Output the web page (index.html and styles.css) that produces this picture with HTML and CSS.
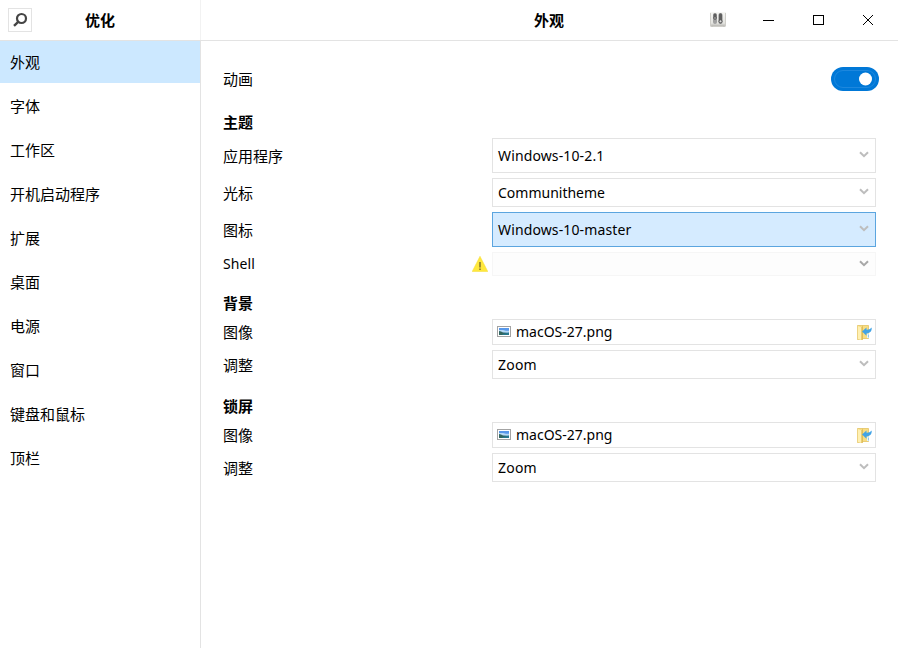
FILE: index.html
```html
<!DOCTYPE html>
<html lang="zh-CN">
<head>
<meta charset="utf-8">
<title>优化</title>
<link rel="stylesheet" href="styles.css">
</head>
<body>
<svg class="defs" width="0" height="0">
  <symbol id="chevron" viewBox="0 0 10 7"><path d="M1 1.200 5 5.200 9 1.200" fill="none" stroke="currentColor" stroke-width="2"/></symbol>
  <symbol id="picture" viewBox="0 0 14 11">
    <rect x=".5" y=".5" width="13" height="10" fill="#fff" stroke="#a3a3a3"/>
    <rect x="2" y="2" width="10" height="7" fill="#5797ea"/>
    <path d="M2 4h4l3 .8h3v2H2z" fill="#b5d8f5"/>
    <path d="M2 5q2 0 4 1.500l6 .5v2H2z" fill="#32665f"/>
    <path d="M6 8 12 6.500V9H5z" fill="#26788d"/>
  </symbol>
  <symbol id="open" viewBox="0 0 16 17">
    <path d="M1.500 1.500h5v14h-5zM6.500 1.500h6v13h-6z" fill="#f8dd83" stroke="#e3c363" stroke-width=".8"/>
    <path d="M1.800 2 5.500 3.500v12.500l-3.700-1z" fill="#fff0b2"/>
    <path d="M6 3v13" stroke="#d9b64f"/>
    <path d="M11 9.500h2v4.500h-2z" fill="#e8f4fb"/>
    <path d="M6 7.500 10.500 3.500v2.300Q13.500 6 15.800 3.500q0 5-4 5.700l-1.300.2v2.300z" fill="#42a4e6"/>
    <path d="M12.500 10.500v3" stroke="#8bc9ef"/>
  </symbol>
</svg>
<div class="window">
  <header class="titlebar">
    <div class="side-title">
      <button class="search" aria-label="搜索"><svg width="16" height="16" viewBox="0 0 16 16"><circle cx="9.500" cy="6.500" r="4.500" fill="none" stroke="#454545" stroke-width="2.200"/><path d="M6.200 9.800 2 13.800" stroke="#454545" stroke-width="2.400"/></svg></button>
      <h1>优化</h1>
    </div>
    <div class="main-title">
      <h1>外观</h1>
      <div class="controls">
        <svg class="app" width="16" height="16" viewBox="0 0 16 16">
          <defs><linearGradient id="plate" x2="0" y2="1"><stop stop-color="#f7f7f5"/><stop offset=".75" stop-color="#e3e3df"/><stop offset="1" stop-color="#aaa9a4"/></linearGradient></defs>
          <path d="M0 0h16v13q0 2-2 2H2q-2 0-2-2z" fill="url(#plate)"/>
          <path d="M.5 1v12q0 1.500 2 1.500h11q2 0 2-1.500V1" fill="none" stroke="#cfcec9"/>
          <rect x="3" y="1" width="4" height="11" rx="2" fill="#a0a0a0"/><rect x="8.500" y="1" width="4" height="11" rx="2" fill="#888"/>
          <path d="M3.500 3a1.500 1.500 0 0 1 3 0v3h-3zM9 3a1.500 1.500 0 0 1 3 0v5H9z" fill="#5e5e5e"/>
          <circle cx="5" cy="6" r="1.300" fill="#ccc" stroke="#555"/><circle cx="10.500" cy="9.300" r="1.500" fill="#ddd" stroke="#555"/>
        </svg>
        <svg width="12" height="12" viewBox="0 0 12 12" shape-rendering="crispEdges"><path d="M.5 6.500h11" stroke="#000"/></svg>
        <svg width="12" height="12" viewBox="0 0 12 12" shape-rendering="crispEdges"><path d="M1 1.500h10v9H1z" fill="none" stroke="#000"/></svg>
        <svg width="12" height="12" viewBox="0 0 12 12"><path d="M1 1l10 10M11 1 1 11" stroke="#000"/></svg>
      </div>
    </div>
  </header>
  <div class="body">
    <nav class="sidebar">
      <a class="active">外观</a><a>字体</a><a>工作区</a><a>开机启动程序</a><a>扩展</a><a>桌面</a><a>电源</a><a>窗口</a><a>键盘和鼠标</a><a>顶栏</a>
    </nav>
    <main class="content">
      <div class="row animation"><span class="label">动画</span>
        <svg class="switch" width="48" height="24" viewBox="0 0 48 24"><rect width="48" height="24" rx="12" fill="#0078d7"/><rect x="3.500" y="3.500" width="41" height="17" rx="8.500" fill="none" stroke="#3192e0" stroke-width=".6"/><circle cx="34.500" cy="12" r="6.500" fill="#fff"/></svg>
      </div>
      <h2>主题</h2>
      <section>
        <div class="row tall"><span class="label">应用程序</span><div class="field"><span class="value windows">Windows-10-2.1</span><svg class="arrow"><use href="#chevron"/></svg></div></div>
        <div class="row mid"><span class="label">光标</span><div class="field"><span class="value">Communitheme</span><svg class="arrow"><use href="#chevron"/></svg></div></div>
        <div class="row tall"><span class="label">图标</span><div class="field selected"><span class="value windows">Windows-10-master</span><svg class="arrow"><use href="#chevron"/></svg></div></div>
        <div class="row shell"><span class="label latin">Shell</span>
          <svg class="warning" width="16" height="16" viewBox="0 0 16 16"><path d="M8 .3 15.800 15.500H.2z" fill="#ffe83d" stroke="#f5dc32" stroke-width=".5"/><path d="M8 6v5.500M8 12.500v1.500" stroke="#a08f30" stroke-width="2"/></svg>
          <div class="field disabled"><svg class="arrow"><use href="#chevron"/></svg></div></div>
      </section>
      <h2>背景</h2>
      <section>
        <div class="row file"><span class="label">图像</span><div class="field"><svg class="thumb"><use href="#picture"/></svg><span class="value">macOS-27.png</span><svg class="folder"><use href="#open"/></svg></div></div>
        <div class="row mid"><span class="label">调整</span><div class="field"><span class="value zoom">Zoom</span><svg class="arrow"><use href="#chevron"/></svg></div></div>
      </section>
      <h2>锁屏</h2>
      <section>
        <div class="row file"><span class="label">图像</span><div class="field"><svg class="thumb"><use href="#picture"/></svg><span class="value">macOS-27.png</span><svg class="folder"><use href="#open"/></svg></div></div>
        <div class="row mid"><span class="label">调整</span><div class="field"><span class="value zoom">Zoom</span><svg class="arrow"><use href="#chevron"/></svg></div></div>
      </section>
    </main>
  </div>
</div>
</body>
</html>
```
FILE: styles.css
```css
* { box-sizing: border-box; }
body { margin: 0; background: #fff; color: #000; font: 15px/22px "Noto Sans CJK SC", sans-serif; }
.defs { display: block; height: 0; }
.window { height: 648px; display: flex; flex-direction: column; overflow: hidden; }
.titlebar { display: flex; height: 41px; border-bottom: 1px solid #e3e3e3; }
h1, h2 { margin: 0; font-size: 15px; line-height: 22px; font-weight: 700; }
.side-title { display: grid; grid-template-columns: 24px 1fr 24px; align-items: center; width: 201px; padding: 0 8px; border-right: 1px solid #f2f2f2; text-align: center; }
.search { width: 24px; height: 24px; padding: 3px; border: 1px solid #e3e3e3; background: #fff; }
.search svg { display: block; }
.main-title { display: grid; grid-template-columns: 164px 1fr 164px; flex: 1; align-items: center; padding: 0 24px 0 23px; }
.main-title h1 { grid-column: 2; text-align: center; }
.controls { display: flex; gap: 38px; align-items: center; justify-content: flex-end; }
.controls .app { margin-right: -2px; }
.controls svg { display: block; flex: none; }
.body { display: flex; flex: 1; }
.sidebar { width: 201px; display: flex; flex-direction: column; gap: 2px; border-right: 1px solid #e3e3e3; }
.sidebar a { height: 42px; padding: 10px; }
.sidebar .active { background: #cce8ff; }
.content { flex: 1; padding: 26px 22px 0; }
.row { display: grid; grid-template-columns: 249px 20px 384px; align-items: center; }
.row .field { grid-column: 3; height: 100%; }
.label { height: 22px; }
.latin, .value { font-family: "Noto Sans", sans-serif; font-size: 14px; }
.latin, .windows { letter-spacing: .13px; }
.zoom { letter-spacing: .2px; }
.animation { display: flex; justify-content: space-between; height: 24px; margin-right: -3px; }
.switch { display: block; }
h2 { margin-top: 20px; margin-bottom: 5px; }
section { display: flex; flex-direction: column; gap: 5px; }
section + h2 { margin-top: 16px; }
.tall { height: 35px; }
.mid { height: 29px; }
.shell { height: 24px; }
.file { height: 26px; }
.field { display: flex; align-items: center; padding: 0 7px 0 5px; border: 1px solid #e3e3e3; }
.selected { background: #d5ebff; border-color: #5ba5df; }
.disabled { background: #fdfdfd; border-color: #f6f6f6; }
.arrow { width: 10px; height: 7px; margin-left: auto; margin-right: -1px; margin-top: -2px; color: #bdbdbd; }
.disabled .arrow { color: #a8a8a8; }
.thumb { width: 14px; height: 11px; margin-right: 5px; margin-bottom: 1px; }
.folder { width: 16px; height: 17px; margin-left: auto; margin-right: -4px; }
.file .field { padding-left: 4px; }
```
